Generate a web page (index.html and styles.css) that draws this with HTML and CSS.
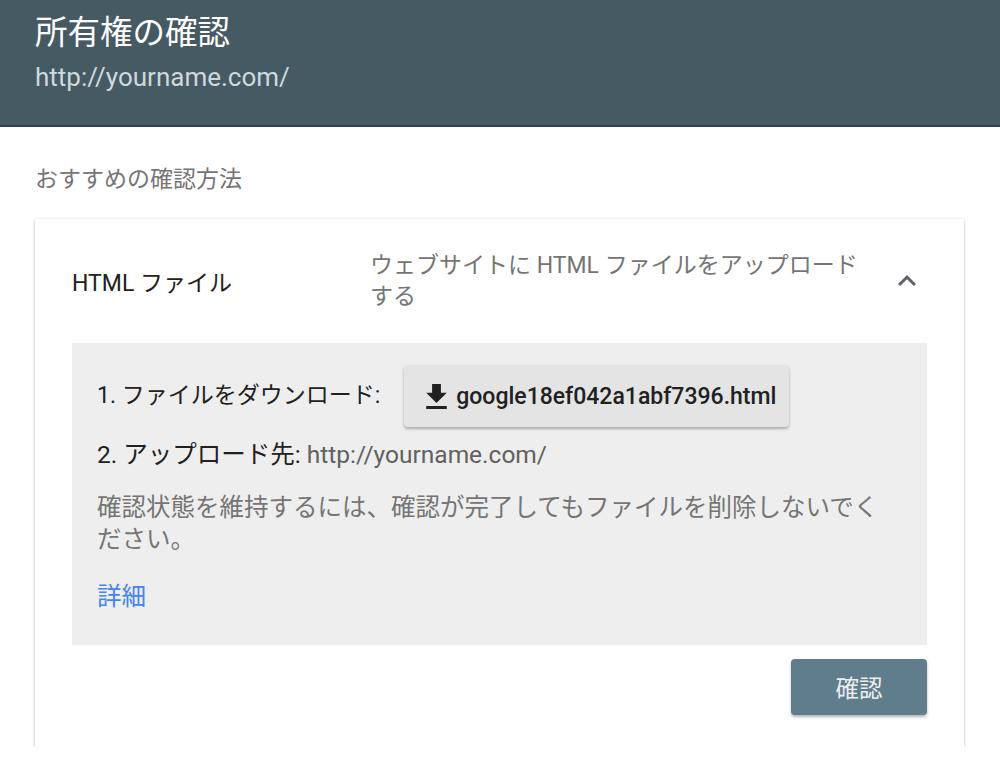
FILE: index.html
```html
<!DOCTYPE html>
<html lang="ja">
<head>
    <meta charset="UTF-8">
    <meta name="viewport" content="width=device-width, initial-scale=1.0">
    <title>所有権の確認</title>
    <link rel="stylesheet" href="styles.css">
</head>
<body>
    <header class="top-bar">
        <h1 class="top-title">所有権の確認</h1>
        <div class="top-url">http://yourname.com/</div>
    </header>

    <main class="content">
        <div class="section-label">おすすめの確認方法</div>

        <div class="method-card">
            <div class="method-head">
                <div class="method-name">HTML ファイル</div>
                <div class="method-desc">ウェブサイトに HTML ファイルをアップロードする</div>
                <button class="icon-btn" aria-label="閉じる">
                    <svg viewBox="0 0 24 24" width="36" height="36"><path d="M12 8l-6 6 1.41 1.41L12 10.83l4.59 4.58L18 14z"/></svg>
                </button>
            </div>

            <div class="method-body">
                <div class="step step-download">
                    <span>1. ファイルをダウンロード:</span>
                    <button class="download-btn">
                        <svg viewBox="5 3 14 17" width="21" height="25"><path d="M19 9h-4V3H9v6H5l7 7 7-7zM5 18v2h14v-2H5z"/></svg>
                        google18ef042a1abf7396.html
                    </button>
                </div>
                <div class="step step-upload">2. アップロード先: <span class="step-url">http://yourname.com/</span></div>
                <p class="note">確認状態を維持するには、確認が完了してもファイルを削除しないでください。</p>
                <a class="more-link" href="#">詳細</a>
            </div>

            <div class="method-foot">
                <button class="confirm-btn">確認</button>
            </div>
        </div>
    </main>
</body>
</html>
```

FILE: styles.css
```css
* {
    margin: 0;
    padding: 0;
    box-sizing: border-box;
}

body {
    font-family: Roboto, "Noto Sans CJK JP", sans-serif;
    font-size: 23px;
    color: #212121;
    background: #ffffff;
}

button {
    font-family: inherit;
    border: none;
    cursor: pointer;
}

.top-bar {
    background: #465a64;
    height: 127px;
    padding: 13px 35px 0;
    border-bottom: 2px solid #2c414b;
}

.top-title {
    font-size: 32.5px;
    font-weight: 400;
    line-height: 40px;
    color: #ffffff;
}

.top-url {
    margin-top: 9px;
    font-size: 26px;
    line-height: 30px;
    color: #cfd8dc;
}

.content {
    padding: 0 36px 0 35px;
}

.section-label {
    margin-top: 37px;
    line-height: 32px;
    color: #757575;
}

.method-card {
    margin-top: 23px;
    background: #ffffff;
    box-shadow: 0 1px 3px rgba(0, 0, 0, 0.25), 0 1px 1px rgba(0, 0, 0, 0.12);
    padding-bottom: 32px;
}

.method-head {
    display: flex;
    align-items: center;
    height: 124px;
    padding: 0 39px 0 37px;
}

.method-name {
    flex: 0 0 298px;
}

.method-desc {
    width: 500px;
    line-height: 31px;
    color: #757575;
}

.icon-btn {
    margin-left: auto;
    width: 36px;
    height: 36px;
    background: none;
    fill: #5f6368;
}

.method-body {
    margin: 0 37px 0 37px;
    background: #eeeeee;
    padding: 22px 28px 32px 25px;
}

.step {
    line-height: 32px;
    margin-top: 12px;
}

.step-download {
    display: flex;
    align-items: center;
    margin-top: 0;
}

.step-upload {
    font-size: 24.5px;
}

.download-btn {
    display: flex;
    align-items: center;
    gap: 9px;
    height: 62px;
    margin-left: 24px;
    padding: 0 13px 0 22px;
    background: #e4e4e4;
    border-radius: 4px;
    box-shadow: 0 2px 3px rgba(0, 0, 0, 0.28);
    font-size: 23px;
    font-weight: 500;
    color: #212121;
}

.download-btn svg {
    fill: #212121;
}

.step-url {
    color: #616161;
}

.note {
    margin-top: 21px;
    font-size: 24.5px;
    line-height: 32px;
    color: #757575;
}

.more-link {
    display: inline-block;
    margin-top: 25px;
    font-size: 24.5px;
    line-height: 32px;
    color: #4285f4;
    text-decoration: none;
}

.method-foot {
    display: flex;
    justify-content: flex-end;
    padding: 14px 37px 0;
}

.confirm-btn {
    width: 136px;
    height: 56px;
    background: #607d8b;
    color: #eceff1;
    font-size: 23.5px;
    border-radius: 4px;
    box-shadow: 0 2px 3px rgba(0, 0, 0, 0.3);
}
```
